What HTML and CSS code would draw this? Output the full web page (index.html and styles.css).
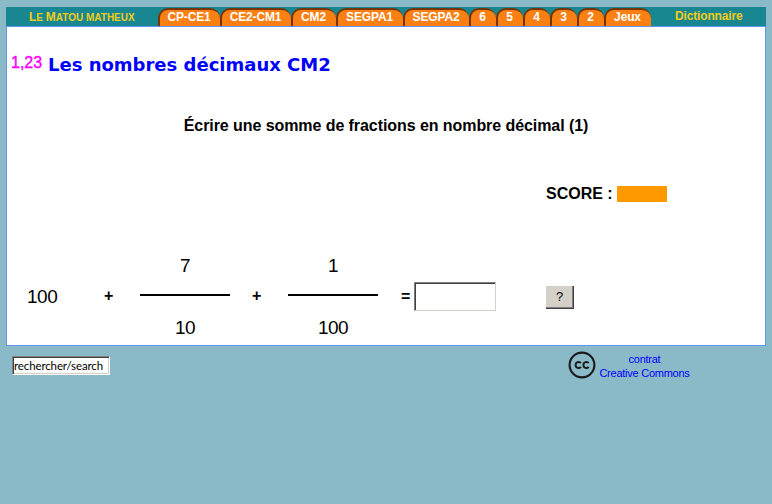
FILE: index.html
```html
<!DOCTYPE html>
<html lang="fr">
<head>
<meta charset="utf-8">
<title>Le Matou matheux</title>
<link rel="stylesheet" href="styles.css">
</head>
<body>
<nav class="nav">
  <a class="brand"><b>L</b>e <b>M</b>atou matheux</a>
  <div class="tabs">
    <a class="tab w62">CP-CE1</a>
    <a class="tab w71">CE2-CM1</a>
    <a class="tab w45">CM2</a>
    <a class="tab w67">SEGPA1</a>
    <a class="tab w66">SEGPA2</a>
    <a class="tab">6</a>
    <a class="tab">5</a>
    <a class="tab">4</a>
    <a class="tab">3</a>
    <a class="tab">2</a>
    <a class="tab w47">Jeux</a>
  </div>
  <a class="dictionary">Dictionnaire</a>
</nav>
<main class="sheet">
  <header class="heading">
    <span class="badge">1,23</span>
    <h1>Les nombres décimaux CM2</h1>
  </header>
  <h2><span>Écrire une somme de fractions en nombre décimal (1)</span></h2>
  <div class="score"><span class="score-label">SCORE :</span><span class="score-box"></span></div>
  <div class="equation">
    <span class="whole">100</span>
    <span class="op">+</span>
    <div class="fraction"><span>7</span><i></i><span>10</span></div>
    <span class="op">+</span>
    <div class="fraction"><span>1</span><i></i><span>100</span></div>
    <span class="equals">=</span>
    <input class="answer" type="text" aria-label="Réponse">
    <button class="help">?</button>
  </div>
</main>
<footer class="footer">
  <input class="search" type="text" value="rechercher/search" aria-label="Rechercher">
  <div class="license">
    <svg width="28" height="28" viewBox="0 0 28 28" fill="none" stroke="#1a1a1a">
      <circle cx="14" cy="14" r="12.4" stroke-width="2.1"/>
      <path d="M12.9 12.1C11.4 10.1 7.6 10.8 7.6 14S11.4 17.9 12.9 15.9M20.7 12.1C19.2 10.1 15.4 10.8 15.4 14S19.2 17.9 20.7 15.9" stroke-width="1.9"/>
    </svg>
    <a class="contract"><span>contrat</span><br><span>Creative Commons</span></a>
  </div>
</footer>
</body>
</html>
```
FILE: styles.css
```css
* { box-sizing: border-box; }
body {
  margin: 0;
  padding: 7px 6px 0;
  background: #8abac8;
  font-family: "Liberation Sans", Arial, sans-serif;
  color: #000;
}
.nav {
  display: flex;
  height: 19px;
  background: #198791;
  font-size: 12px;
  font-weight: bold;
  line-height: 19px;
}
.brand, .dictionary { color: #f2cc18; white-space: nowrap; }
.brand { width: 152px; padding-left: 23px; font-size: 10px; text-transform: uppercase; line-height: 20px; }
.brand b { font-size: 12px; }
.tabs { display: flex; padding-top: 1px; }
.tab {
  width: 27px;
  height: 18px;
  padding-right: 2px;
  border-top: 2px solid #753400;
  border-left: 2px solid #753400;
  border-radius: 10px 10px 0 0;
  background: #fb8014;
  color: #fff;
  text-align: center;
  letter-spacing: -.15px;
  line-height: 14px;
}
.w62 { width: 62px; }
.w71 { width: 71px; }
.w45 { width: 45px; }
.w67 { width: 67px; }
.w66 { width: 66px; }
.w47 { width: 47px; }
.dictionary { padding-left: 24px; letter-spacing: -.15px; }
.sheet {
  width: 760px;
  height: 320px;
  border: 1px solid #6495ed;
  background: #fff;
}
.heading { display: flex; height: 74px; padding: 25px 0 0 4px; }
.badge { width: 37px; font-size: 16px; line-height: 22px; color: #f0f; -webkit-text-stroke: .4px #f0f; }
h1 { margin: 0; font: bold 18px/26px "DejaVu Sans", Verdana, sans-serif; color: #00f; white-space: nowrap; }
h2 { height: 85px; margin: 0; padding-top: 15px; text-align: center; font-size: 16px; line-height: 20px; letter-spacing: -.07px; }
.score { display: flex; height: 58px; padding-left: 539px; font-size: 16px; font-weight: bold; line-height: 16px; }
.score-label { width: 71px; white-space: nowrap; }
.score-box { width: 50px; height: 16px; background: #f90; }
.equation { display: flex; align-items: center; height: 101px; padding: 4px 0 0 20px; }
.whole { width: 77px; padding-top: 1px; font-size: 19px; letter-spacing: -.5px; }
.op { width: 36px; padding-bottom: 1px; font-size: 16px; font-weight: bold; }
.fraction { width: 90px; margin-right: 22px; text-align: center; font-size: 19px; letter-spacing: -.5px; line-height: 20px; }
.fraction span { display: block; }
.fraction i { display: block; height: 2px; margin: 18px 0 22px; background: #000; }
.equals { width: 13px; margin-left: 1px; font-size: 16px; font-weight: bold; }
.answer {
  width: 82px;
  height: 29px;
  margin: 0;
  border: 1px solid;
  border-color: #808080 #d4d0c8 #d4d0c8 #808080;
  border-radius: 0;
  box-shadow: inset 1px 1px #404040;
  background: #fff;
}
.help {
  width: 29px;
  height: 24px;
  margin-left: 49px;
  padding: 0;
  border: 0;
  border-radius: 0;
  background: #d4d0c8;
  box-shadow: inset 1px 1px #fff, inset -1px -1px #404040, inset -2px -2px #808080;
  font: 13px "Liberation Sans", Arial, sans-serif;
}
.footer { display: flex; }
.search {
  width: 98px;
  height: 19px;
  margin: 10px 0 0 6px;
  padding: 0 0 0 1px;
  border: 1px solid;
  border-color: #808080 #fff #fff #808080;
  border-radius: 0;
  box-shadow: inset 1px 1px #404040, inset -1px -1px #d4d0c8;
  background: #fff;
  font: 11.5px Lato, sans-serif;
  letter-spacing: -.12px;
  color: #000;
}
.license { display: flex; padding: 5px 0 0 457.5px; }
.contract { width: 98px; padding-top: 1px; text-align: center; font-size: 11px; line-height: 14px; letter-spacing: -.25px; color: #00f; white-space: nowrap; }
```
